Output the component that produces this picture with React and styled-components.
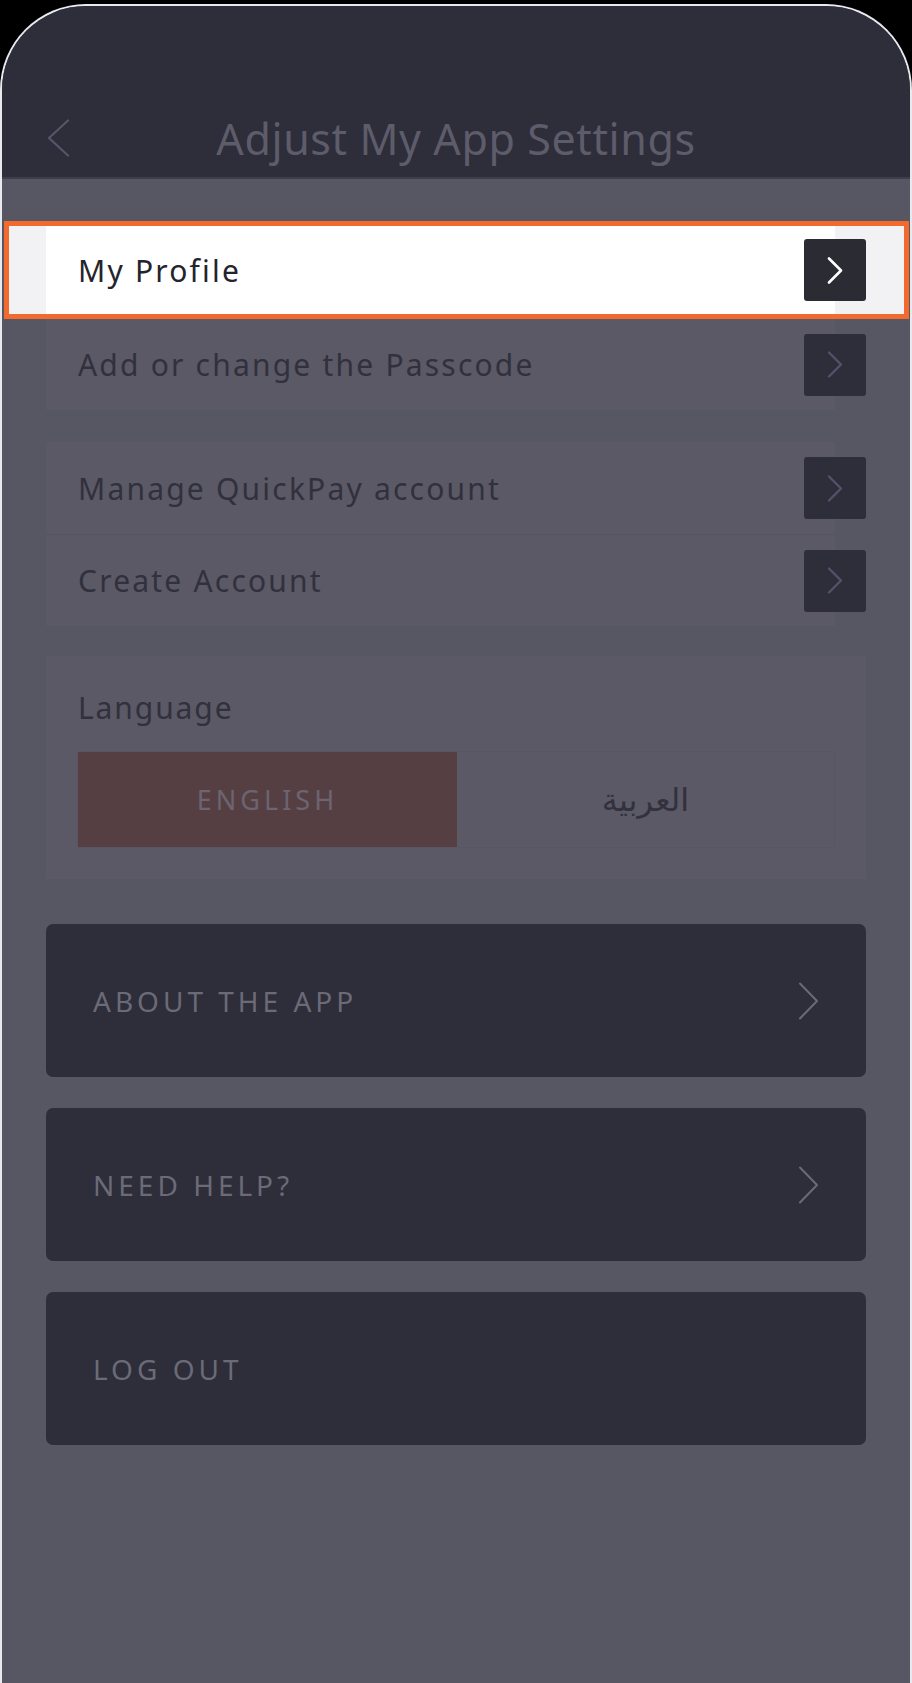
import React from 'react'
import styled, {createGlobalStyle} from 'styled-components'

const GlobalStyle = createGlobalStyle`
    html, body {
        margin: 0;
        padding: 0;
        background-color: #000;
    }
    body {
        font-family: "Noto Sans", "DejaVu Sans", sans-serif;
    }
`

const Frame = styled.div`
    margin-top: 4px;
    min-height: calc(100vh - 4px);
    box-sizing: border-box;
    border: 2px solid #e9e9f0;
    border-bottom: none;
    border-radius: 86px 86px 0 0;
    background-color: #575663;
    overflow: hidden;
    display: flex;
    flex-direction: column;
`

const Header = styled.header`
    height: 171px;
    background-color: #2e2d3a;
    border-bottom: 2px solid #3e3d4a;
    display: flex;
    flex-direction: column;
    justify-content: flex-end;
`

const NavBar = styled.div`
    height: 78px;
    display: grid;
    grid-template-columns: 100px 1fr 100px;
    align-items: center;
`

const BackButton = styled.button`
    background: none;
    border: none;
    padding: 0 0 0 45px;
    display: flex;
    align-items: center;
    cursor: pointer;
`

const Title = styled.h1`
    margin: 0;
    text-align: center;
    font-size: 43px;
    font-weight: 400;
    color: #5d5c6a;
    letter-spacing: 0.6px;
`

const Body = styled.main`
    padding: 42px 44px 40px 44px;
    display: flex;
    flex-direction: column;
`

const Card = styled.section`
    width: ${p => p.wide ? '820px' : '789px'};
    box-sizing: border-box;
    background-color: #5a5965;
    margin-bottom: ${p => p.gap || 0}px;
    display: flex;
    flex-direction: column;
`

const Highlight = styled.div`
    margin: 0 -74px 0 -42px;
    height: 98px;
    box-sizing: border-box;
    border: 5px solid #f26a2e;
    background-color: #f2f2f5;
    padding-left: 37px;
    display: flex;
    align-items: center;
`

const Row = styled.div`
    height: ${p => p.h || 92}px;
    width: 789px;
    box-sizing: border-box;
    flex-shrink: 0;
    padding-left: 32px;
    display: flex;
    align-items: center;
    justify-content: space-between;
    background-color: ${p => p.active ? '#fff' : 'transparent'};
    border-top: ${p => p.divider ? '1px solid #54535f' : 'none'};
`

const RowLabel = styled.span`
    font-size: 30px;
    letter-spacing: 2.2px;
    color: ${p => p.active ? '#24242c' : '#31303d'};
`

const ArrowButton = styled.button`
    width: 62px;
    height: 62px;
    margin-right: -31px;
    border: none;
    border-radius: 3px;
    background-color: ${p => p.active ? '#2b2c33' : '#2e2d3a'};
    display: flex;
    align-items: center;
    justify-content: center;
    padding: 0;
    cursor: pointer;
`

const LanguageCard = styled(Card)`
    padding: 0 31px 31px 31px;
`

const LanguageLabel = styled.div`
    height: 95px;
    box-sizing: border-box;
    padding: 8px 0 0 1px;
    display: flex;
    align-items: center;
    font-size: 30px;
    letter-spacing: 1.9px;
    color: #31303d;
`

const Segmented = styled.div`
    display: grid;
    grid-template-columns: 379px 1fr;
    height: 97px;
    border: 1px solid #575662;
    box-sizing: border-box;
`

const Segment = styled.button`
    border: none;
    margin: 0;
    padding: 0;
    background-color: ${p => p.selected ? '#553f43' : '#5a5965'};
    color: ${p => p.selected ? '#6c6470' : '#32313d'};
    font-family: ${p => p.selected ? '"Noto Sans", sans-serif' : '"DejaVu Sans", "Noto Sans", sans-serif'};
    font-size: ${p => p.selected ? '27px' : '32px'};
    letter-spacing: ${p => p.selected ? '4px' : '0'};
    cursor: pointer;
`

const BigButton = styled.button`
    width: 820px;
    height: 153px;
    margin-top: ${p => p.gap}px;
    border: none;
    border-radius: 7px;
    background-color: #2e2d3a;
    padding: 0 47px;
    display: flex;
    align-items: center;
    justify-content: space-between;
    font-family: "Noto Sans", sans-serif;
    font-size: 28px;
    letter-spacing: 4px;
    color: #6b6a77;
    cursor: pointer;
`

function Chevron({color, w, h, sw, left}) {
    const pts = left
        ? `${w - 2},1.5 2,${h / 2} ${w - 2},${h - 1.5}`
        : `2,1.5 ${w - 2},${h / 2} 2,${h - 1.5}`
    return (
        <svg width={w} height={h} viewBox={`0 0 ${w} ${h}`} fill='none'>
            <polyline points={pts} stroke={color} strokeWidth={sw} strokeLinecap='round' strokeLinejoin='round'/>
        </svg>
    )
}

const menu = [
    [{label: 'My Profile', active: true}, {label: 'Add or change the Passcode'}],
    [{label: 'Manage QuickPay account'}, {label: 'Create Account'}],
]

export default function App() {
    return (<>
        <GlobalStyle/>
        <Frame>
            <Header>
                <NavBar>
                    <BackButton aria-label='Back'>
                        <Chevron left w={23} h={38} sw={2.2} color='#56556a'/>
                    </BackButton>
                    <Title>Adjust My App Settings</Title>
                    <div/>
                </NavBar>
            </Header>
            <Body>
                <Card gap={32}>
                    <Highlight>
                        <Row active h={88}>
                            <RowLabel active>{menu[0][0].label}</RowLabel>
                            <ArrowButton active>
                                <Chevron w={16} h={27} sw={2.6} color='#ffffff'/>
                            </ArrowButton>
                        </Row>
                    </Highlight>
                    <Row h={91}>
                        <RowLabel>{menu[0][1].label}</RowLabel>
                        <ArrowButton>
                            <Chevron w={16} h={27} sw={2.4} color='#52516a'/>
                        </ArrowButton>
                    </Row>
                </Card>
                <Card gap={30}>
                    {menu[1].map((item, i) => (
                        <Row key={item.label} divider={i > 0}>
                            <RowLabel>{item.label}</RowLabel>
                            <ArrowButton>
                                <Chevron w={16} h={27} sw={2.4} color='#52516a'/>
                            </ArrowButton>
                        </Row>
                    ))}
                </Card>
                <LanguageCard wide>
                    <LanguageLabel>Language</LanguageLabel>
                    <Segmented>
                        <Segment selected>ENGLISH</Segment>
                        <Segment>العربية</Segment>
                    </Segmented>
                </LanguageCard>
                <BigButton gap={45}>
                    ABOUT THE APP
                    <Chevron w={21} h={38} sw={2} color='#6b6a77'/>
                </BigButton>
                <BigButton gap={31}>
                    NEED HELP?
                    <Chevron w={21} h={38} sw={2} color='#6b6a77'/>
                </BigButton>
                <BigButton gap={31}>
                    LOG OUT
                </BigButton>
            </Body>
        </Frame>
    </>)
}
